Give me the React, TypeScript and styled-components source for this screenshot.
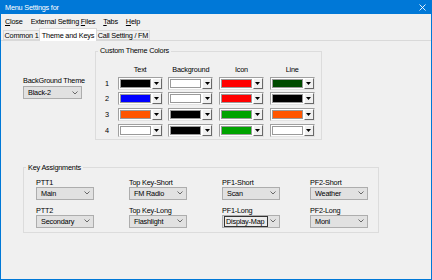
import React from "react";
import styled, { createGlobalStyle } from "styled-components";

const GlobalStyle = createGlobalStyle`
  body {
    margin: 0;
    background: #ffffff;
  }
`;

const Window = styled.div`
  width: 432px;
  height: 280px;
  box-sizing: border-box;
  display: flex;
  flex-direction: column;
  background: #f0f0f0;
  border: 1px solid #0078d7;
  border-top: 0;
  font-family: "Liberation Sans", Arial, sans-serif;
  font-size: 7.3px;
  letter-spacing: -0.2px;
  color: #000;
  overflow: hidden;
`;

const TitleBar = styled.div`
  height: 14px;
  flex: none;
  display: flex;
  align-items: center;
  justify-content: space-between;
  padding: 0 5px 0 4px;
  background: #0078d7;
  color: #fff;
`;

const MenuBar = styled.div`
  height: 14px;
  flex: none;
  display: flex;
  align-items: center;
`;

const MenuItem = styled.span`
  padding: 0 4px;
`;

const TabStrip = styled.div`
  height: 12px;
  flex: none;
  display: flex;
  align-items: flex-end;
  padding-left: 2px;
`;

const Tab = styled.div<{ $active?: boolean; $w: number }>`
  position: relative;
  z-index: ${(p) => (p.$active ? 2 : 1)};
  box-sizing: border-box;
  width: ${(p) => p.$w}px;
  height: ${(p) => (p.$active ? "13px" : "10px")};
  margin-bottom: ${(p) => (p.$active ? "-1px" : "0")};
  margin-left: -1px;
  padding-top: ${(p) => (p.$active ? "1px" : "0")};
  display: flex;
  align-items: center;
  justify-content: center;
  white-space: nowrap;
  border: 1px solid #d9d9d9;
  border-bottom: ${(p) => (p.$active ? "0" : "1px solid #d9d9d9")};
  background: ${(p) => (p.$active ? "#ffffff" : "#f0f0f0")};
  &:first-child {
    margin-left: 0;
  }
`;

const TabPage = styled.div`
  flex: 1;
  display: flex;
  flex-direction: column;
  border-top: 1px solid #d9d9d9;
  padding-top: 6px;
`;

const TopRow = styled.div`
  display: flex;
  align-items: flex-start;
  padding-left: 22px;
`;

const ThemeBlock = styled.div`
  width: 72px;
  padding-top: 30px;
  display: flex;
  flex-direction: column;
`;

const Label = styled.div`
  line-height: 8px;
  height: 8px;
  white-space: nowrap;
`;

const Group = styled.fieldset<{ $width: number }>`
  width: ${(p) => p.$width}px;
  box-sizing: border-box;
  margin: 0;
  padding: 0;
  min-width: 0;
  border: 1px solid #dcdcdc;
`;

const Legend = styled.legend`
  margin-left: 2px;
  padding: 0 2px;
  line-height: 8px;
`;

const ColorGrid = styled.div`
  display: grid;
  grid-template-columns: 16px repeat(4, 45px);
  grid-template-rows: 9px repeat(4, 13px);
  column-gap: 5.67px;
  row-gap: 2.67px;
  padding: 10px 0 2px;
`;

const ColHead = styled.div`
  line-height: 9px;
  text-align: center;
  white-space: nowrap;
`;

const RowNum = styled.div`
  line-height: 13px;
  padding-left: 6px;
  width: 10px;
  text-align: center;
`;

const ColorCombo = styled.div`
  display: flex;
  width: 45px;
  height: 13px;
  box-sizing: border-box;
  border: 1px solid;
  border-color: #a0a0a0 #e3e3e3 #e3e3e3 #a0a0a0;
  background: #ffffff;
  padding: 1px 0 1px 1px;
  gap: 1px;
`;

const Swatch = styled.div<{ $color: string }>`
  flex: 1;
  background: ${(p) => p.$color};
  border: 1px solid #9a9a9a;
`;

const DropButton = styled.div`
  width: 10px;
  box-sizing: border-box;
  margin-top: -1px;
  margin-bottom: -1px;
  display: flex;
  align-items: center;
  justify-content: center;
  background: #f0f0f0;
  border: 1px solid;
  border-color: #ffffff #696969 #696969 #ffffff;
`;

const Combo = styled.div<{ $width?: number }>`
  width: ${(p) => p.$width ?? 58}px;
  height: 13px;
  box-sizing: border-box;
  display: flex;
  align-items: center;
  justify-content: space-between;
  background: #e1e1e1;
  border: 1px solid #adadad;
  padding: 0 3px 0 2px;
  white-space: nowrap;
`;

const ComboText = styled.span<{ $focus?: boolean }>`
  box-sizing: border-box;
  padding: 0 1px;
  line-height: 9px;
  border: 1px solid ${(p) => (p.$focus ? "#333333" : "transparent")};
  margin-left: ${(p) => (p.$focus ? "-1px" : "0")};
  width: ${(p) => (p.$focus ? "44px" : "auto")};
  background: ${(p) => (p.$focus ? "#ececec" : "transparent")};
`;

const KeyGroupWrap = styled.div`
  margin-top: 24px;
  padding-left: 22px;
`;

const KeyGrid = styled.div`
  display: grid;
  grid-template-columns: 93px 93px 88px 58px;
  row-gap: 7px;
  padding: 7px 0 4px 12px;
`;

const KeyCell = styled.div`
  display: flex;
  flex-direction: column;
`;

const Chevron = () => (
  <svg width="6" height="4" viewBox="0 0 6 4">
    <path d="M0.5 0.5 L3 3 L5.5 0.5" fill="none" stroke="#5a5a5a" strokeWidth="0.9" />
  </svg>
);

const Triangle = () => (
  <svg width="5" height="3" viewBox="0 0 5 3">
    <path d="M0 0 H5 L2.5 3 Z" fill="#000" />
  </svg>
);

const CloseIcon = () => (
  <svg width="7" height="7" viewBox="0 0 7 7">
    <path d="M0.5 0.5 L6.5 6.5 M6.5 0.5 L0.5 6.5" stroke="#fff" strokeWidth="0.9" />
  </svg>
);

const colorRows = [
  ["#000000", "#ffffff", "#ff0000", "#004b00"],
  ["#0000ff", "#ffffff", "#ff0000", "#000000"],
  ["#ff5500", "#000000", "#00a300", "#ff5500"],
  ["#ffffff", "#000000", "#00a300", "#ffffff"],
];

const keys = [
  { label: "PTT1", value: "Main" },
  { label: "Top Key-Short", value: "FM Radio" },
  { label: "PF1-Short", value: "Scan" },
  { label: "PF2-Short", value: "Weather" },
  { label: "PTT2", value: "Secondary" },
  { label: "Top Key-Long", value: "Flashlight" },
  { label: "PF1-Long", value: "Display-Map", focus: true },
  { label: "PF2-Long", value: "Moni" },
];

export default function App() {
  return (
    <>
      <GlobalStyle />
      <Window>
        <TitleBar>
          <span>Menu Settings for</span>
          <CloseIcon />
        </TitleBar>
        <MenuBar>
          <MenuItem>
            <u>C</u>lose
          </MenuItem>
          <MenuItem>
            External Setting <u>F</u>iles
          </MenuItem>
          <MenuItem>
            <u>T</u>abs
          </MenuItem>
          <MenuItem>
            <u>H</u>elp
          </MenuItem>
        </MenuBar>
        <TabStrip>
          <Tab $w={37}>Common 1</Tab>
          <Tab $w={58} $active>
            Theme and Keys
          </Tab>
          <Tab $w={54}>Call Setting / FM</Tab>
        </TabStrip>
        <TabPage>
          <TopRow>
            <ThemeBlock>
              <Label>BackGround Theme</Label>
              <Combo $width={59} style={{ marginTop: 1 }}>
                <ComboText>Black-2</ComboText>
                <Chevron />
              </Combo>
            </ThemeBlock>
            <Group $width={227}>
              <Legend>Custom Theme Colors</Legend>
              <ColorGrid>
                <div />
                <ColHead>Text</ColHead>
                <ColHead>Background</ColHead>
                <ColHead>Icon</ColHead>
                <ColHead>Line</ColHead>
                {colorRows.map((row, i) => (
                  <React.Fragment key={i}>
                    <RowNum>{i + 1}</RowNum>
                    {row.map((c, j) => (
                      <ColorCombo key={j}>
                        <Swatch $color={c} />
                        <DropButton>
                          <Triangle />
                        </DropButton>
                      </ColorCombo>
                    ))}
                  </React.Fragment>
                ))}
              </ColorGrid>
            </Group>
          </TopRow>
          <KeyGroupWrap>
            <Group $width={356}>
              <Legend>Key Assignments</Legend>
              <KeyGrid>
                {keys.map((k) => (
                  <KeyCell key={k.label}>
                    <Label>{k.label}</Label>
                    <Combo>
                      <ComboText $focus={k.focus}>{k.value}</ComboText>
                      <Chevron />
                    </Combo>
                  </KeyCell>
                ))}
              </KeyGrid>
            </Group>
          </KeyGroupWrap>
        </TabPage>
      </Window>
    </>
  );
}
